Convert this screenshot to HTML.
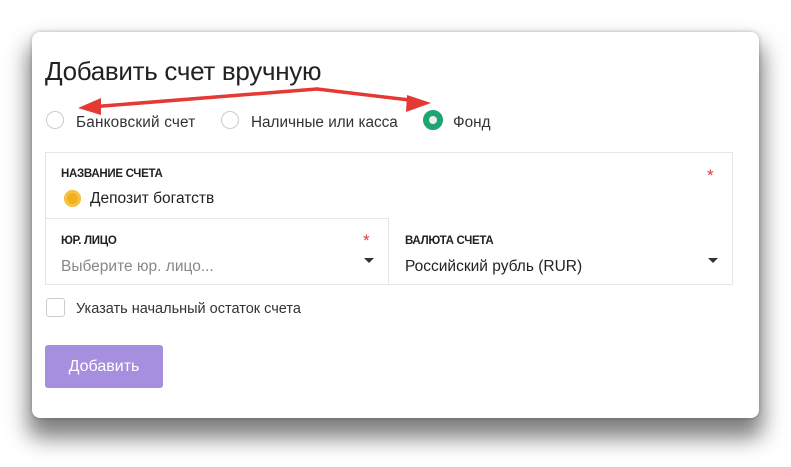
<!DOCTYPE html>
<html><head><meta charset="utf-8"><style>
body{margin:0;width:791px;height:467px;background:#fff;position:relative;overflow:hidden;font-family:"Liberation Sans","DejaVu Sans",sans-serif;color:#333}
.card{position:absolute;left:32px;top:32px;width:727px;height:386px;background:#fff;border-radius:8px;box-shadow:0 16px 22px 4px rgba(0,0,0,.5),0 0 4px rgba(0,0,0,.25)}
.a{position:absolute;white-space:nowrap}
.radio{position:absolute;width:18px;height:18px;border:1px solid #ccc;border-radius:50%;box-sizing:border-box;background:#fff}
.lbl{font-size:11.5px;font-weight:bold;color:#222;letter-spacing:-.3px}
.box{position:absolute;border:1px solid #e6e6e6;box-sizing:border-box}
.tri{position:absolute;width:0;height:0;border-left:5px solid transparent;border-right:5px solid transparent;border-top:5px solid #333}
</style></head><body>
<div class="card"></div>
<div class="a" style="left:45px;top:56px;font-size:26px;color:#222;letter-spacing:-.3px">Добавить счет вручную</div>
<div class="radio" style="left:46px;top:111px"></div>
<div class="a" style="left:76px;top:114px;font-size:15.3px;color:#333;letter-spacing:.2px">Банковский счет</div>
<div class="radio" style="left:221px;top:111px"></div>
<div class="a" style="left:251px;top:114px;font-size:15.3px;color:#333">Наличные или касса</div>
<div class="radio" style="left:423px;top:110px;border:6px solid #1ea672;width:20px;height:20px;background:#eee"></div>
<div class="a" style="left:453px;top:114px;font-size:15.3px;color:#333">Фонд</div>
<div class="box" style="left:45px;top:152px;width:688px;height:133px"></div>
<div class="box" style="left:45px;top:218px;width:344px;height:67px;border-top:1px solid #e6e6e6;border-right:1px solid #e6e6e6;border-bottom:none;border-left:none"></div>
<div class="a lbl" style="left:61px;top:168px">НАЗВАНИЕ СЧЕТА</div>
<div class="a" style="left:707px;top:166px;color:#e53935;font-size:17px">*</div>
<div class="a" style="left:64px;top:190px;width:17px;height:17px;border-radius:50%;background:#f2b01e;box-shadow:inset 0 0 0 3px #f6c244"></div>
<div class="a" style="left:90px;top:190px;font-size:15.5px;color:#222">Депозит богатств</div>
<div class="a lbl" style="left:61px;top:235px">ЮР. ЛИЦО</div>
<div class="a" style="left:363px;top:231px;color:#e53935;font-size:17px">*</div>
<div class="a" style="left:61px;top:258px;font-size:15.5px;color:#888">Выберите юр. лицо...</div>
<div class="tri" style="left:364px;top:258px"></div>
<div class="a lbl" style="left:405px;top:235px">ВАЛЮТА СЧЕТА</div>
<div class="a" style="left:405px;top:258px;font-size:15.5px;color:#222">Российский рубль (RUR)</div>
<div class="tri" style="left:708px;top:258px"></div>
<div class="a" style="left:46px;top:298px;width:19px;height:19px;border:1px solid #ccc;border-radius:3px;box-sizing:border-box"></div>
<div class="a" style="left:76px;top:301px;font-size:14.5px;color:#333">Указать начальный остаток счета</div>
<div class="a" style="left:45px;top:345px;width:118px;height:43px;background:#a78fe0;border-radius:3px;color:#fff;font-size:16px;line-height:43px;text-align:center">Добавить</div>
<svg class="a" style="left:0;top:0" width="791" height="467">
<g stroke="#e53935" stroke-width="3.5" fill="none" stroke-linecap="round">
<path d="M317 89 L90 107"/><path d="M317 89 L418 101"/></g>
<polygon points="78,108 101,98 101,115" fill="#e53935"/>
<polygon points="431,103 407,95 406,112" fill="#e53935"/>
</svg>
</body></html>
